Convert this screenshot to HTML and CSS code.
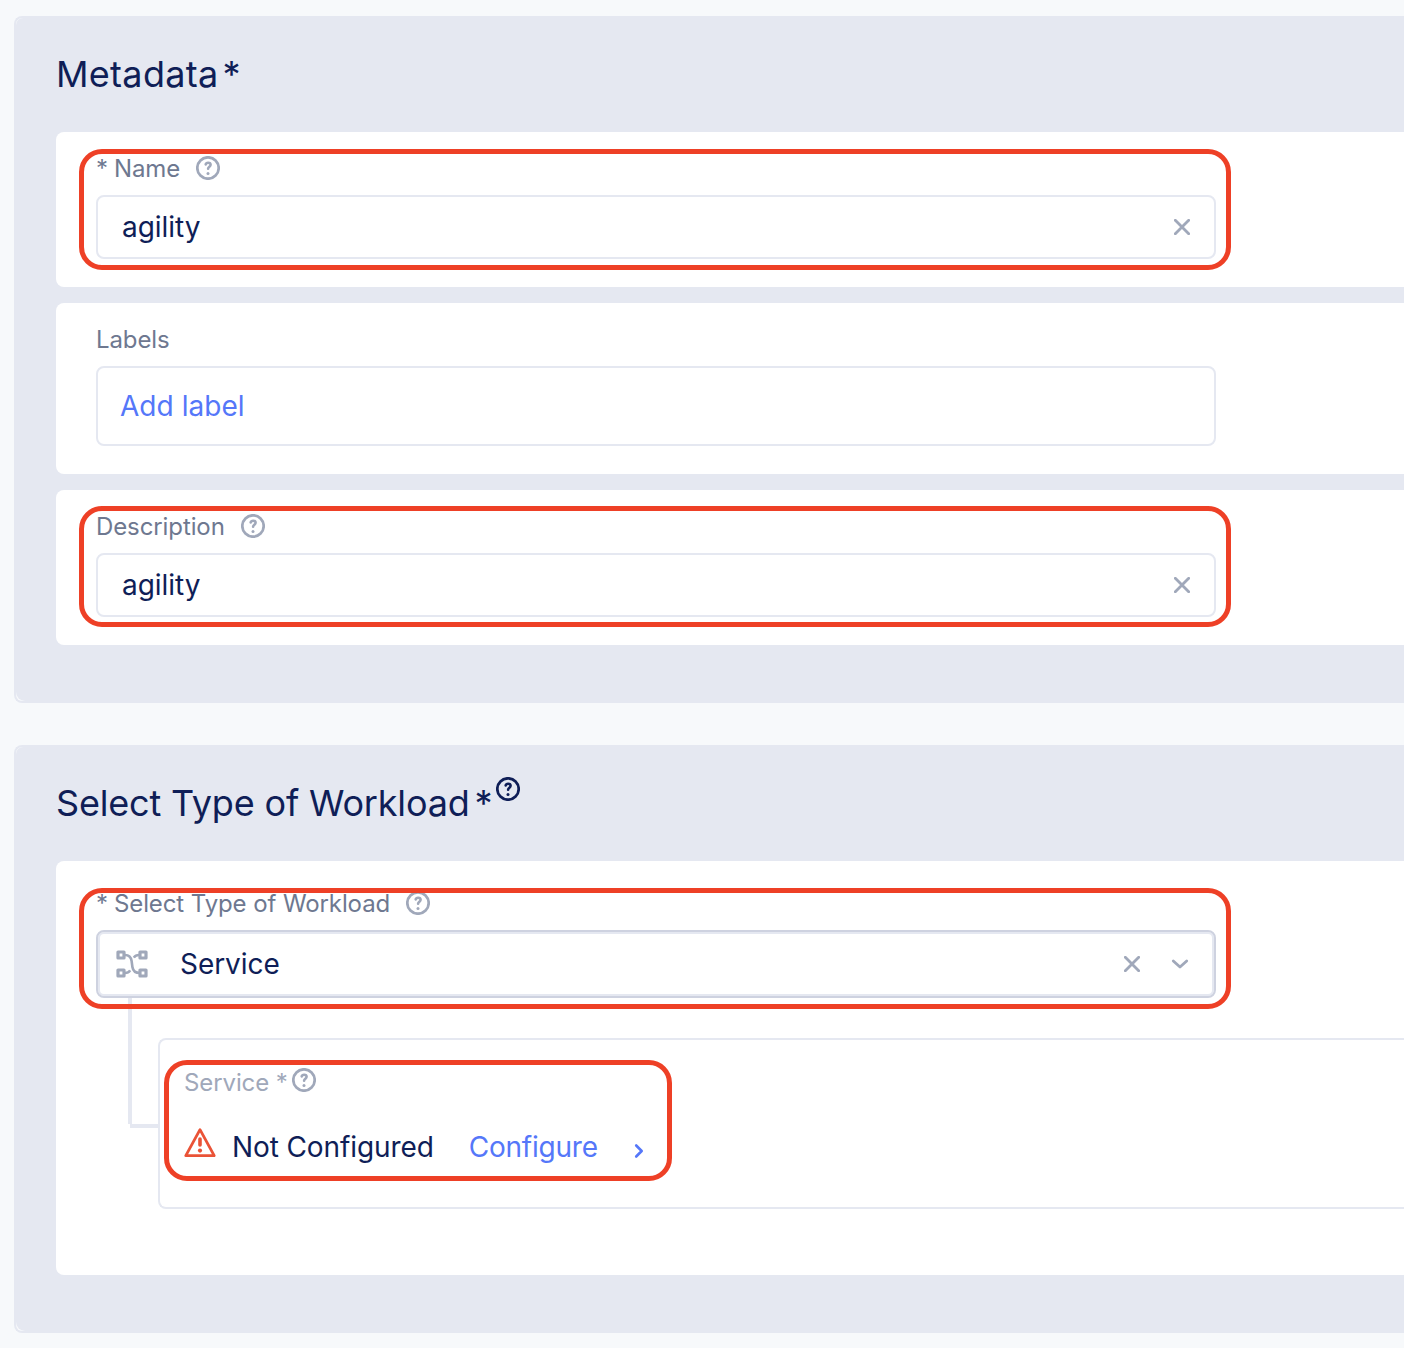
FILE: index.html
```html
<!DOCTYPE html>
<html lang="en">
<head>
<meta charset="utf-8">
<title>Workload</title>
<link rel="stylesheet" href="styles.css">
</head>
<body>
<svg class="defs" width="0" height="0" aria-hidden="true">
  <symbol id="help" viewBox="0 0 24 24">
    <circle cx="12" cy="12" r="10.700" fill="none" stroke="currentColor" stroke-width="2.700"/>
    <path d="M9.700 8.400C10 7.200 10.900 6.700 12.100 6.700c1.500 0 2.500.8 2.500 2.100 0 1.900-2.500 2-2.500 4" fill="none" stroke="currentColor" stroke-width="2.600" stroke-linecap="round"/>
    <circle cx="12" cy="17.500" r="1.500" fill="currentColor"/>
  </symbol>
  <symbol id="clear" viewBox="0 0 16 16">
    <path d="M1.300 1.300l13.400 13.400M14.700 1.300L1.300 14.700" fill="none" stroke="currentColor" stroke-width="2.800" stroke-linecap="round"/>
  </symbol>
</svg>
<main class="page">
  <section class="panel">
    <div class="panel-body">
      <h2 class="title"><span class="title-text">Metadata</span><span class="star">*</span></h2>
      <div class="card">
        <div class="field">
          <div class="label"><span class="req">*</span><span>Name</span><svg class="help"><use href="#help"/></svg></div>
          <div class="input"><span class="value">agility</span><svg class="clear"><use href="#clear"/></svg></div>
          <div class="ring"></div>
        </div>
      </div>
      <div class="card">
        <div class="field">
          <div class="label"><span>Labels</span></div>
          <div class="input tall"><a class="link add">Add label</a></div>
        </div>
      </div>
      <div class="card">
        <div class="field">
          <div class="label"><span>Description</span><svg class="help"><use href="#help"/></svg></div>
          <div class="input"><span class="value">agility</span><svg class="clear"><use href="#clear"/></svg></div>
          <div class="ring raised"></div>
        </div>
      </div>
    </div>
  </section>
  <section class="panel">
    <div class="panel-body">
      <h2 class="title tight"><span class="title-text">Select Type of Workload</span><span class="star">*</span><svg class="help title-help"><use href="#help"/></svg></h2>
      <div class="card workload">
        <div class="field">
          <div class="label"><span class="req">*</span><span>Select Type of Workload</span><svg class="help"><use href="#help"/></svg></div>
          <div class="select">
            <svg class="nodes" viewBox="0 0 32 28" fill="none" stroke="currentColor">
              <g stroke-width="3.200" stroke-linejoin="round"><rect x="2" y="2" width="6" height="6"/><rect x="24" y="2" width="6" height="6"/><rect x="2" y="20" width="6" height="6"/><rect x="24" y="20" width="6" height="6"/></g>
              <path d="M9 5c4 0 6 2 6.600 6l.8 6c.6 4 2.600 6 7.600 6M9 23c2.500 0 4-.8 5.200-2.600M23 5c-2.500 0-4 .8-5.200 2.600" stroke-width="2.600"/>
            </svg>
            <span class="value">Service</span>
            <svg class="clear"><use href="#clear"/></svg>
            <svg class="chevron" viewBox="0 0 18 12"><path d="M2.300 3l6.700 6 6.700-6" fill="none" stroke="currentColor" stroke-width="2.800" stroke-linecap="round" stroke-linejoin="round"/></svg>
          </div>
          <div class="ring"></div>
        </div>
        <div class="branch">
          <div class="connector"><div class="stem"></div><div class="arm"></div></div>
          <div class="child">
            <div class="child-content">
              <div class="child-label"><span>Service *</span><svg class="help"><use href="#help"/></svg></div>
              <div class="status">
                <svg class="warn" viewBox="0 0 32 31" fill="none" stroke="currentColor"><path d="M16 2.700L30.200 28.700H1.800z" stroke-width="2.800" stroke-linejoin="round"/><path d="M16 12v6" stroke-width="3.600" stroke-linecap="round"/><circle cx="16" cy="23.600" r="2.100" fill="currentColor" stroke="none"/></svg>
                <span class="status-text">Not Configured</span>
                <a class="link configure">Configure</a>
                <svg class="next" viewBox="0 0 10 16"><path d="M2.200 2.500l5.500 5.500-5.500 5.500" fill="none" stroke="currentColor" stroke-width="2.600" stroke-linecap="round" stroke-linejoin="round"/></svg>
              </div>
              <div class="ring inner-ring"></div>
            </div>
          </div>
        </div>
      </div>
    </div>
  </section>
</main>
</body>
</html>
```
FILE: styles.css
```css
* { box-sizing: border-box; }
body {
  margin: 0;
  background: #f7f9fb;
  color: #0f1e57;
  font-family: Inter, "Liberation Sans", sans-serif;
  font-size: 28px;
  font-weight: 400;
  overflow: hidden;
}
svg { display: block; flex: none; overflow: visible; }
.defs { position: absolute; }
.page {
  display: flex;
  flex-direction: column;
  gap: 42px;
  height: 1348px;
  padding: 16px 0 15px 14px;
}
.panel {
  border: 2px solid #e5e8f1;
  border-right: 0;
  border-radius: 8px 0 0 8px;
  background: #f7f9fb;
}
.panel-body {
  display: flex;
  flex-direction: column;
  gap: 16px;
  padding: 0 0 56px 40px;
  border-radius: 7px 0 0 9px;
  background: #e5e8f1;
}
.title {
  display: flex;
  height: 98px;
  margin: 0;
  padding-top: 34px;
  font-size: 36px;
  font-weight: 400;
  line-height: 44px;
  letter-spacing: 0.3px;
}
.tight { letter-spacing: -0.18px; }
.star { margin-left: 4px; }
.tight .star { margin-left: 5px; }
.title-help { margin: -4px 0 0 4px; }
.card {
  padding: 21px 0 28px 40px;
  border-radius: 8px 0 0 8px;
  background: #fff;
}
.field { position: relative; width: 1120px; }
.label {
  display: flex;
  align-items: center;
  height: 30px;
  margin-bottom: 12px;
  color: #6e7890;
  font-size: 24px;
  letter-spacing: -0.1px;
}
.req { margin-right: 6px; }
.help { width: 24px; height: 24px; }
.label .help { margin-left: 16px; color: #a0a8ba; }
.input {
  display: flex;
  align-items: center;
  height: 64px;
  padding: 0 24px;
  border: 2px solid #e5e8f1;
  border-radius: 8px;
}
.tall { height: 80px; }
.value { flex: 1; letter-spacing: -0.05px; }
.clear { width: 16px; height: 16px; color: #a0a8ba; }
.link { color: #5577f9; letter-spacing: 0.05px; }
.add { margin-left: -2px; }
.ring {
  position: absolute;
  inset: -4px -15px -11px -17px;
  border: 5px solid #ee4026;
  border-radius: 23px;
}
.raised { inset: -5px -15px -10px -17px; }
.workload { height: 414px; padding-top: 27px; }
.workload .ring { inset: 0 -15px -11px -17px; }
.select {
  display: flex;
  align-items: center;
  height: 68px;
  padding: 0 25px 0 18px;
  border: 2px solid #ced2e0;
  border-radius: 8px;
  box-shadow: inset 0 0 0 2px #e5e8f1;
}
.nodes { width: 32px; height: 28px; margin-right: 32px; color: #a0a8ba; }
.chevron { width: 18px; height: 12px; margin-left: 31px; color: #a0a8ba; }
.branch { display: flex; }
.connector { width: 30px; margin-left: 32px; }
.stem { width: 4px; height: 126px; background: #e5e8f1; }
.arm { width: 28px; height: 4px; margin-left: 2px; background: #e5e8f1; }
.child {
  flex: 1;
  height: 171px;
  margin-top: 40px;
  padding: 20px 0 0 4px;
  border: 2px solid #e5e8f1;
  border-right: 0;
  border-radius: 8px 0 0 8px;
}
.child-content {
  position: relative;
  width: 508px;
  height: 121px;
  padding: 8px 0 0 20px;
}
.workload .inner-ring { inset: 0; }
.child-label {
  display: flex;
  height: 30px;
  color: #a0a8ba;
  font-size: 24px;
  line-height: 30px;
  letter-spacing: -0.1px;
}
.child-label .help { margin: 0 0 0 4px; }
.status { display: flex; height: 34px; margin-top: 32px; line-height: 34px; }
.warn { width: 32px; height: 31px; margin: -3px 16px 0 0; color: #ea5337; }
.status-text { letter-spacing: -0.1px; }
.configure { margin-left: 35px; letter-spacing: -0.22px; }
.next { width: 10px; height: 16px; margin: 13px 0 0 36px; color: #5577f9; }
```
